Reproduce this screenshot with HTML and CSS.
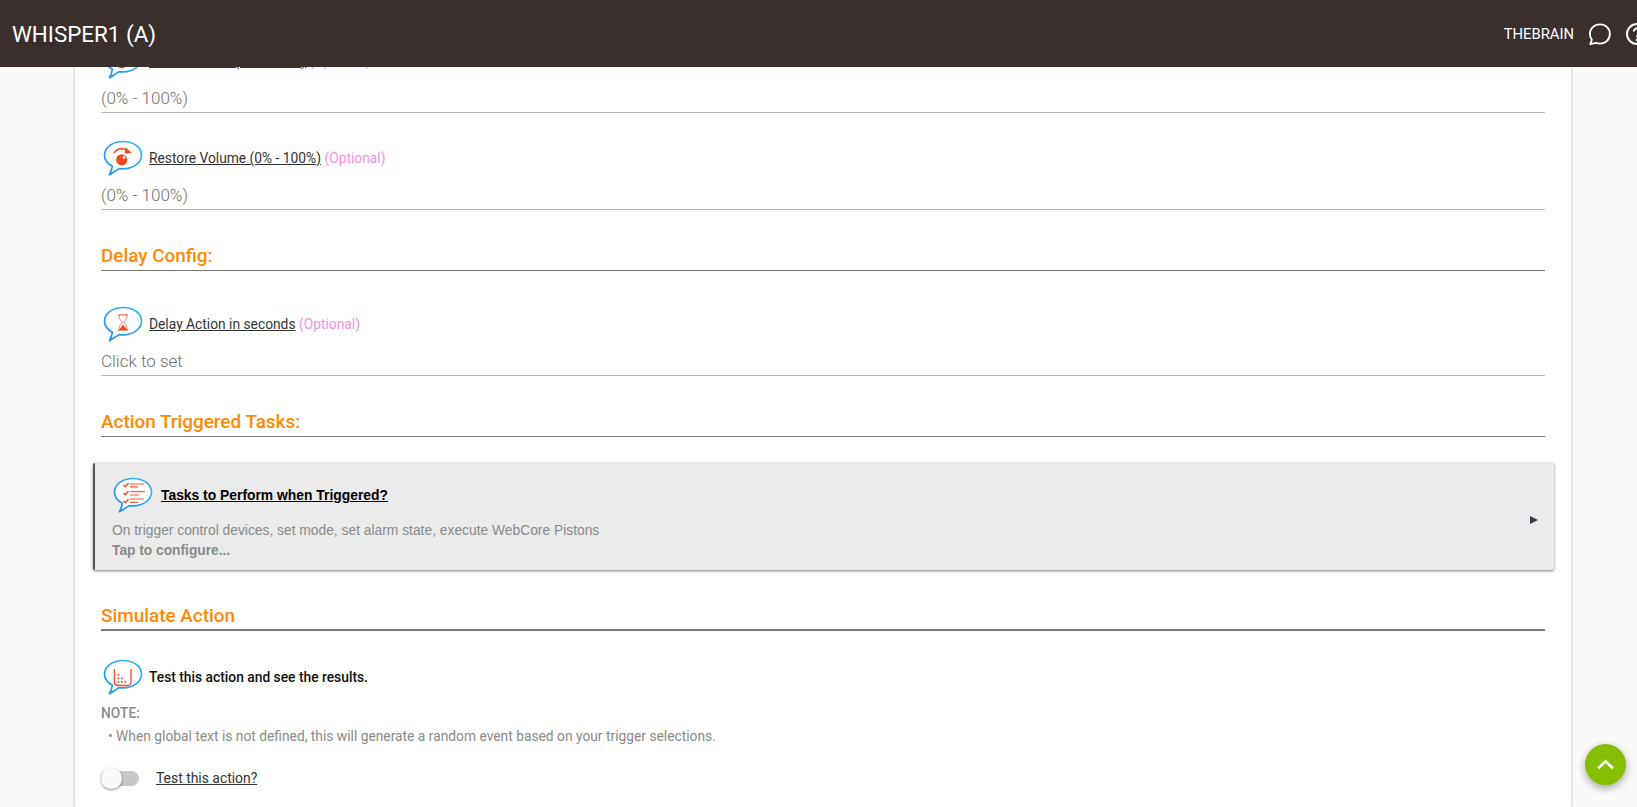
FILE: index.html
```html
<!DOCTYPE html>
<html lang="en">
<head>
<meta charset="utf-8">
<title>WHISPER1 (A)</title>
<link rel="stylesheet" href="styles.css">
</head>
<body>
<svg class="defs" width="0" height="0" aria-hidden="true">
  <defs>
    <linearGradient id="blue" x1="0" y1="1" x2="1" y2="0">
      <stop offset="0" stop-color="#1c90f0"/>
      <stop offset="1" stop-color="#3ab9f8"/>
    </linearGradient>
    <symbol id="bubble" viewBox="0 0 40 38">
      <path d="M20 2.500C9.800 2.500 1.500 8.500 1.500 16c0 4.700 3.100 8.700 7.900 11.200-.5 2.900-1.500 5.900-3 8.600l9.800-6.200c1.200.2 2.500.3 3.800.3 10.200 0 18.500-6 18.500-13.900S30.200 2.500 20 2.500z" fill="#fff" stroke="url(#blue)" stroke-width="1.700" stroke-linejoin="round"/>
    </symbol>
    <symbol id="restore" viewBox="0 0 40 38">
      <use href="#bubble" width="40" height="38"/>
      <circle cx="18.700" cy="20.800" r="5.600" fill="#f4491f"/>
      <circle cx="21" cy="18.500" r="1.400" fill="#fff"/>
      <path d="M11 14c3-4.800 9-5.500 13.500-2.500" fill="none" stroke="#f4491f" stroke-width="1.500"/>
      <path d="M22.500 8.500l6.300 5.500-7 .5z" fill="#f4491f"/>
    </symbol>
  </defs>
</svg>
<header class="topbar">
  <div class="title">WHISPER1 (A)</div>
  <div class="top-right">
    <span class="user">THEBRAIN</span>
    <svg class="chat" viewBox="0 0 24 24"><path d="M12.500 3C7.300 3 3.500 6.700 3.500 11.500c0 2.100.6 3.800 1.700 5.200L3.800 20.600l5.200-1.100c1.100.4 2.300.6 3.500.6 5 0 8.700-3.700 8.700-8.600S17.500 3 12.500 3z" fill="none" stroke="#fff" stroke-width="1.700" stroke-linejoin="round"/></svg>
    <svg class="help" viewBox="0 0 24 24"><circle cx="12" cy="12" r="10" fill="none" stroke="#fff" stroke-width="2"/><path d="M8.800 9.500a3.200 3.200 0 1 1 5 2.700c-1.200.8-1.800 1.500-1.800 2.800" fill="none" stroke="#fff" stroke-width="2"/><circle cx="12" cy="18" r="1.300" fill="#fff"/></svg>
  </div>
</header>

<main class="card">
  <section class="field">
    <div class="label-row">
      <svg class="ico"><use href="#restore"/></svg>
      <span class="label"><u>Volume Level (0% - 100%)</u> <span class="opt">(Optional)</span></span>
    </div>
    <div class="input">(0% - 100%)</div>
  </section>

  <section class="field">
    <div class="label-row">
      <svg class="ico"><use href="#restore"/></svg>
      <span class="label"><u>Restore Volume (0% - 100%)</u> <span class="opt">(Optional)</span></span>
    </div>
    <div class="input">(0% - 100%)</div>
  </section>

  <h2 class="heading">Delay Config:</h2>

  <section class="field after-heading">
    <div class="label-row">
      <svg class="ico" viewBox="0 0 40 38">
        <use href="#bubble" width="40" height="38"/>
        <path d="M15 9.800h10M15 25h10" fill="none" stroke="#f26a4f" stroke-width="1.300"/>
        <path d="M16.200 10v3.500l3.300 3.800-3.300 3.700v4M23.800 10v3.500l-3.300 3.800 3.300 3.700v4" fill="none" stroke="#f4816a" stroke-width="1"/>
        <path d="M16 25l4-5.500 4 5.500z" fill="#f4491f"/>
      </svg>
      <span class="label"><u>Delay Action in seconds</u> <span class="opt">(Optional)</span></span>
    </div>
    <div class="input">Click to set</div>
  </section>

  <h2 class="heading">Action Triggered Tasks:</h2>

  <a class="tasks">
    <div class="tasks-head">
      <svg class="ico" viewBox="0 0 40 38">
        <use href="#bubble" width="40" height="38"/>
        <path d="M10.500 9l1.700 1.700 3.300-3.500M10.500 17l1.700 1.700 3.300-3.500M10.500 25l1.700 1.700 3.300-3.500" fill="none" stroke="#f4491f" stroke-width="1.500"/>
        <path d="M17 8h14M17 10.800h8M17 15.700h15M17 19h9M17 23h14M17 26.300h8" fill="none" stroke="#f4603a" stroke-width="1.200"/>
      </svg>
      <span class="tasks-title">Tasks to Perform when Triggered?</span>
    </div>
    <div class="tasks-desc">On trigger control devices, set mode, set alarm state, execute WebCore Pistons</div>
    <div class="tasks-tap">Tap to configure...</div>
    <span class="arrow"></span>
  </a>

  <h2 class="heading sim">Simulate Action</h2>

  <div class="label-row test-row">
    <svg class="ico" viewBox="0 0 40 38">
      <use href="#bubble" width="40" height="38"/>
      <path d="M11.500 11v13.500a3 3 0 0 0 3 3h10.500a3 3 0 0 0 3-3V11" fill="none" stroke="#f4491f" stroke-width="1.300"/>
      <path d="M14.500 16h1.700v1.700h-1.700zM14.500 19.500h1.700v1.700h-1.700zM14.500 23h1.700v1.700h-1.700zM18 19.500h1.700v1.700H18zM18 23h1.700v1.700H18zM21.500 23h1.700v1.700h-1.700z" fill="#f4491f"/>
    </svg>
    <span class="test-text">Test this action and see the results.</span>
  </div>
  <div class="note">NOTE:</div>
  <div class="bullet">• When global text is not defined, this will generate a random event based on your trigger selections.</div>
  <div class="switch-row">
    <span class="switch"><span class="knob"></span></span>
    <u class="switch-label">Test this action?</u>
  </div>
</main>

<button class="fab" aria-label="Back to top">
  <svg viewBox="0 0 24 24"><path d="M5 15.500l7-6.500 7 6.500" fill="none" stroke="#fff" stroke-width="2.600"/></svg>
</button>
</body>
</html>
```

FILE: styles.css
```css
* { box-sizing: border-box; }
html, body { height: 807px; }
body {
  margin: 0;
  overflow: hidden;
  background: #fafafa;
  font-family: Roboto, "Liberation Sans", sans-serif;
}
.defs { position: absolute; }
.topbar {
  position: fixed;
  top: 0; left: 0; right: 0;
  height: 67px;
  background: #3a2f2d;
  color: #fff;
  display: flex;
  align-items: center;
  justify-content: space-between;
  padding: 1px 0 0 12px;
  overflow: hidden;
  z-index: 5;
}
.title { font-size: 22.400px; line-height: 1; }
.top-right {
  display: flex;
  align-items: center;
  margin-right: -12px;
}
.user { font-size: 14.800px; }
.chat { width: 27px; height: 27px; margin-left: 12px; }
.help { width: 24px; height: 24px; margin-left: 12px; }
.card {
  width: 1496px;
  height: 807px;
  margin-left: 75px;
  padding: 0 26px;
  background: #fff;
  box-shadow: 0 0 3px rgba(0,0,0,.3);
  overflow: hidden;
}
.field { padding-top: 42px; }
.field + .field { padding-top: 26px; }
.label-row {
  display: flex;
  align-items: center;
  height: 38px;
}
.ico { width: 40px; height: 38px; flex: none; margin-left: 2px; }
.label {
  font-size: 13.800px;
  color: #333;
  margin-left: 6px;
}
.opt { color: #f78ef0; }
.input {
  height: 33px;
  padding-top: 7px;
  border-bottom: 1px solid #b9b9b9;
  font-size: 17px;
  font-weight: 300;
  line-height: 22px;
  color: #6f6f6f;
}
.heading {
  margin: 0;
  color: #ff8a00;
  font-size: 18.900px;
  font-weight: 500;
  line-height: 24px;
  padding: 34px 0 2px;
  border-bottom: 1px solid #777;
}
.heading.sim { padding: 34px 0 1px; border-bottom-width: 2px; }
.field.after-heading { padding-top: 34px; }
.tasks {
  display: block;
  position: relative;
  margin: 26px -9px 0 -8px;
  height: 107px;
  padding: 13px 0 0 17px;
  background: #ebebeb;
  border-left: 2px solid #555;
  border-radius: 2px;
  box-shadow: 0 1px 3px rgba(0,0,0,.5);
}
.tasks-head { display: flex; align-items: center; height: 38px; }
.tasks-head .ico { margin-left: 1px; }
.tasks-title {
  margin-left: 8px;
  font: bold 13.870px "Liberation Sans", Arial, sans-serif;
  color: #000;
  text-decoration: underline;
}
.tasks-desc {
  margin-top: 6px;
  font: 13.820px/20px "Liberation Sans", Arial, sans-serif;
  color: #8a8a8a;
}
.tasks-tap {
  margin-top: 1px;
  font: bold 13.760px/20px "Liberation Sans", Arial, sans-serif;
  color: #8a8a8a;
}
.arrow {
  position: absolute;
  right: 16px;
  top: 53px;
  border-left: 8px solid #3a3a44;
  border-top: 4.500px solid transparent;
  border-bottom: 4.500px solid transparent;
}
.test-row { margin-top: 27px; }
.test-text { margin-left: 6px; font-size: 13.800px; font-weight: 500; color: #111; }
.note { margin-top: 7px; font-size: 13.800px; font-weight: 500; color: #8a8a8a; line-height: 20px; }
.bullet { margin-top: 3px; margin-left: 7px; font-size: 13.800px; color: #8a8a8a; line-height: 20px; }
.switch-row { display: flex; align-items: center; margin-top: 20px; height: 24px; }
.switch { position: relative; width: 38px; height: 15px; background: #c8c8c8; border-radius: 8px; }
.knob {
  position: absolute;
  left: 0; top: -3px;
  width: 21px; height: 21px;
  background: #fafafa;
  border-radius: 50%;
  box-shadow: 0 1px 3px rgba(0,0,0,.45);
}
.switch-label { margin-left: 17px; font-size: 13.900px; color: #333; }
.fab {
  position: fixed;
  left: 1585px;
  top: 744px;
  width: 41px; height: 41px;
  padding: 8px;
  border: 0;
  border-radius: 50%;
  background: #85bf00;
  box-shadow: 0 3px 8px rgba(0,0,0,.35);
}
.fab svg { display: block; width: 25px; height: 25px; }
```
